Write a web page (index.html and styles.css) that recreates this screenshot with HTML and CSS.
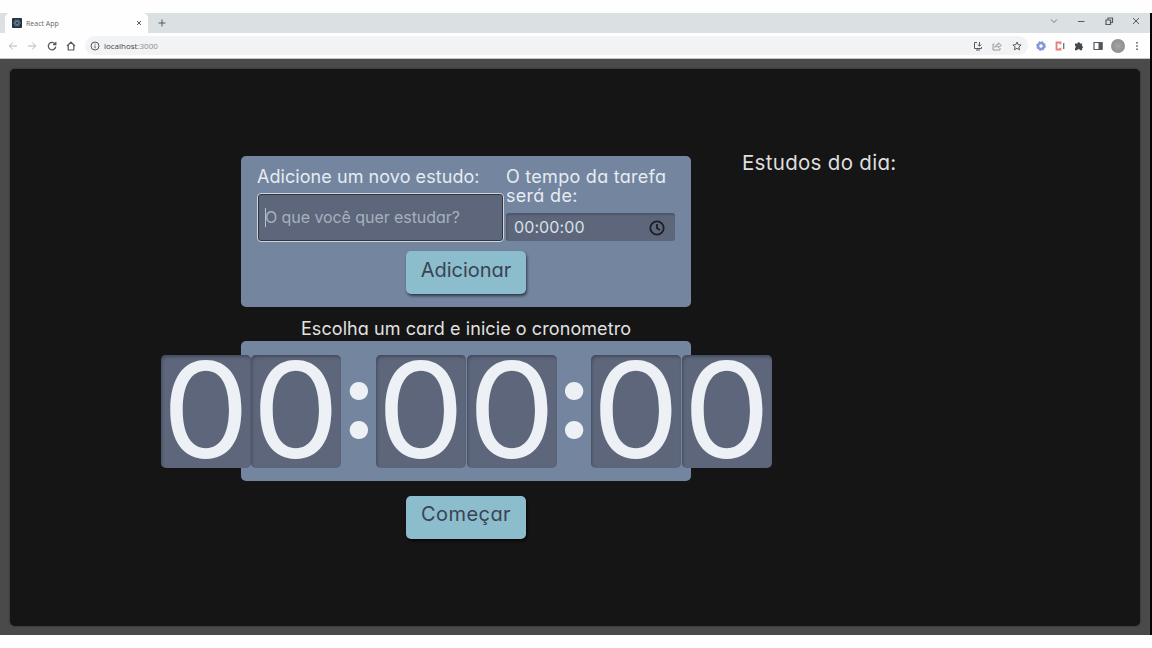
FILE: index.html
```html
<!DOCTYPE html>
<html lang="pt-BR">
<head>
<meta charset="utf-8">
<title>React App</title>
<link rel="stylesheet" href="styles.css">
</head>
<body>
<div class="browser">
  <header class="tabstrip">
    <div class="tab">
      <svg class="favicon" viewBox="0 0 10 10"><rect width="10" height="10" rx="1" fill="#26303d"/><g fill="none" stroke="#638ca3" stroke-width=".7"><ellipse cx="5" cy="5" rx="3.6" ry="1.4"/><ellipse cx="5" cy="5" rx="3.6" ry="1.4" transform="rotate(60 5 5)"/><ellipse cx="5" cy="5" rx="3.6" ry="1.4" transform="rotate(120 5 5)"/></g></svg>
      <span class="tab-title">React App</span>
      <svg class="tab-close" viewBox="0 0 6 6"><path d="M1 1l4 4M5 1L1 5"/></svg>
    </div>
    <svg class="new-tab" viewBox="0 0 8 8"><path d="M4 .5v7M.5 4h7"/></svg>
    <div class="window-controls">
      <svg class="chevron" viewBox="0 0 10 10"><path d="M2 3.500l3 3 3-3"/></svg>
      <svg viewBox="0 0 10 10"><path d="M2 5.500h6.500"/></svg>
      <svg viewBox="0 0 10 10"><path d="M2 4h4.500v4.500H2zM4 3.500V2h4.500v4.500H7" stroke-width="1.200"/></svg>
      <svg viewBox="0 0 10 10"><path d="M2 2l6 6M8 2L2 8"/></svg>
    </div>
  </header>
  <nav class="toolbar">
    <div class="nav-icons">
      <svg class="faded" viewBox="0 0 10 10"><path d="M9 5H1.500M4.800 1.500L1.300 5l3.500 3.500"/></svg>
      <svg class="faded" viewBox="0 0 10 10"><path d="M1 5h7.500M5.200 1.500L8.700 5 5.200 8.500"/></svg>
      <svg viewBox="0 0 10 10"><path d="M8.200 3.200A3.700 3.700 0 1 0 8.700 5.600M8.800 1v2.700H6" stroke-width="1.300"/></svg>
      <svg viewBox="0 0 10 10"><path d="M1 5l4-3.800L9 5M2.200 4.200V9h5.600V4.200" stroke-width="1.200"/></svg>
    </div>
    <div class="address">
      <svg viewBox="0 0 10 10"><circle cx="5" cy="5" r="4"/><path d="M5 4.500v2.800M5 2.600v1"/></svg>
      <span class="url">localhost<span class="port">:3000</span></span>
      <div class="page-actions">
        <svg viewBox="0 0 10 10"><path d="M4 1.500H1.500v6h7V6M3 9h4M6.500 1v4M4.800 3.500l1.700 1.700 1.700-1.700"/></svg>
        <svg viewBox="0 0 10 10" class="soft"><path d="M2.500 3H1v6h7V7M2.800 6.500C3 4.500 4.500 3.500 6.300 3.500V1.800L9.300 4.500 6.300 6.600V5.200C4.800 5.200 3.600 5.500 2.800 6.500z"/></svg>
        <svg viewBox="0 0 10 10"><path d="M5 1l1.200 2.700 2.900.3-2.200 1.900.7 2.900L5 7.300 2.400 8.800l.7-2.900L.9 4l2.900-.3z"/></svg>
      </div>
    </div>
    <div class="extensions">
      <svg viewBox="0 0 10 10"><circle cx="5" cy="5" r="3" stroke="#8298d8" stroke-width="2.600"/><circle cx="5" cy="5" r="4.400" stroke="#8298d8" stroke-width="1" stroke-dasharray="1.700 1.750"/></svg>
      <svg viewBox="0 0 10 10"><path d="M5.500 3.200V1.500h-4v7h4V6.800" stroke="#df8279" stroke-width="1.800"/><path d="M8.700 2v6" stroke="#66727d" stroke-width="1.300"/></svg>
      <svg viewBox="0 0 10 10"><path d="M1 2.500h2.500a1.300 1.300 0 0 1 2.600 0h2V5a1.200 1.200 0 0 1 0 2.300v1.900H5.800a1.200 1.200 0 0 0-2.400 0H1V7a1.200 1.200 0 0 0 0-2.300z" fill="#444a50" stroke="none"/></svg>
      <svg viewBox="0 0 10 10"><path d="M1 1.500h8v7H1z" stroke-width="1.200"/><path d="M6 1.500h3v7H6z" fill="#50555a"/></svg>
      <span class="avatar"></span>
      <svg viewBox="0 0 10 10"><path d="M5 1v1.600M5 4.200v1.600M5 7.400V9" stroke-width="1.600"/></svg>
    </div>
  </nav>
  <div class="viewport">
    <div class="app">
      <main class="main">
        <form class="panel form">
          <div class="fields">
            <div class="field task-field">
              <label class="label task-label">Adicione um novo estudo:</label>
              <div class="input task-input"><span class="caret"></span><span class="placeholder">O que você quer estudar?</span></div>
            </div>
            <div class="field time-field">
              <label class="label"><span class="time-label">O tempo da tarefa</span><br><span class="time-label-end">será de:</span></label>
              <div class="input time-input"><span class="time-value">00:00:00</span>
                <svg class="clock" viewBox="0 0 16 16"><circle cx="8" cy="8" r="6.700"/><path d="M8 4v4.200l3 1.800"/></svg>
              </div>
            </div>
          </div>
          <button class="button" type="button"><span class="add-text">Adicionar</span></button>
        </form>
        <p class="hint">Escolha um card e inicie o cronometro</p>
        <div class="panel clock-panel">
          <span class="digit"><span class="numeral">0</span></span><span class="digit"><span class="numeral">0</span></span>
          <span class="colon">:</span>
          <span class="digit"><span class="numeral">0</span></span><span class="digit"><span class="numeral">0</span></span>
          <span class="colon">:</span>
          <span class="digit"><span class="numeral">0</span></span><span class="digit"><span class="numeral">0</span></span>
        </div>
        <button class="button start" type="button"><span class="start-text">Começar</span></button>
      </main>
      <aside class="aside"><h2 class="aside-title">Estudos do dia:</h2></aside>
    </div>
  </div>
</div>
</body>
</html>
```
FILE: styles.css
```css
* { box-sizing: border-box; }
body {
  margin: 0;
  padding: 13px 0;
  background: #fefefe;
  overflow: hidden;
  font-family: Inter, "Open Sans", sans-serif;
  font-feature-settings: "cv11" 1;
}
svg { display: block; fill: none; stroke: #555b60; stroke-width: 1; }
.browser { height: 622px; border-right: 2px solid #050505; display: flex; flex-direction: column; background: #4a4a4a; }
.tabstrip { height: 20px; flex: none; display: flex; align-items: center; background: #dbe0e3; padding-left: 5px; }
.tab { width: 143px; height: 20px; background: #fefefe; border-radius: 5px 5px 0 0; display: flex; align-items: center; padding: 0 6px 0 7px; }
.favicon { width: 10px; height: 10px; stroke: none; }
.tab-title { flex: 1; margin-left: 4px; font: 7px "Open Sans", sans-serif; color: #666; }
.tab-close { width: 6px; height: 6px; }
.new-tab { width: 8px; height: 8px; margin-left: 10px; }
.window-controls { margin-left: auto; margin-right: 9px; display: flex; gap: 17.500px; }
.window-controls svg { width: 10px; height: 10px; margin-top: -4px; }
.window-controls .chevron { stroke: #777; }
.toolbar { height: 26px; flex: none; background: #fefefe; display: flex; align-items: center; padding: 0 8px; border-bottom: 1px solid #c6c6c6; }
.nav-icons { display: flex; gap: 9.300px; }
.nav-icons svg { width: 10px; height: 10px; }
.faded { stroke: #b5b7b9; }
.address { width: 943px; height: 19px; margin-left: 9px; border-radius: 10px; background: #f1f3f4; display: flex; align-items: center; padding: 0 6px 0 5px; }
.address svg { width: 10px; height: 10px; }
.url { margin-left: 4px; font: 8px "Open Sans", sans-serif; color: #444; }
.port { color: #8a8d90; }
.page-actions { margin-left: auto; display: flex; gap: 9.500px; }
.soft { stroke: #999; }
.extensions { display: flex; align-items: center; gap: 9.200px; margin-left: 8px; }
.extensions svg { width: 10px; height: 10px; }
.avatar { width: 14px; height: 14px; margin: 0 -2px; border-radius: 50%; background: radial-gradient(#a5a5a3, #858585); }
.viewport { flex: 1; padding: 10px 10px 9px; background: #4a4a4a; }
.app { height: 557px; border-radius: 5px; background: #151515; padding: 87px 0 0 231px; display: flex; box-shadow: 0 0 2px #222; }
.main { width: 450px; display: flex; flex-direction: column; align-items: center; }
.panel { width: 450px; flex: none; border-radius: 5px; background: #7485a0; }
.form { height: 151px; padding: 11px 16px 0; display: flex; flex-direction: column; align-items: center; }
.fields { width: 100%; display: flex; gap: 2px; }
.task-field { width: 247px; }
.time-field { width: 169px; }
.label { display: block; font-size: 18px; line-height: 19px; color: #e6ecf2; white-space: nowrap; }
.input { background: #5d667b; display: flex; align-items: center; white-space: nowrap; }
.task-label { letter-spacing: .060px; }
.task-input { margin-top: 7px; height: 49px; border: 1px solid #cbd6df; border-radius: 4px; box-shadow: inset 0 0 0 1px #30353f; padding: 0 0 1px 7px; }
.caret { width: 1px; height: 19px; background: #b7c1cb; }
.placeholder { margin-left: -1px; font-size: 16px; letter-spacing: -.070px; color: #a7b1be; }
.time-label { letter-spacing: .270px; }
.time-label-end { letter-spacing: .300px; }
.time-input { margin-top: 8px; height: 28px; border-radius: 3px; box-shadow: inset 1px 2px 2px #4d566a; padding: 0 10px 0 8px; justify-content: space-between; }
.time-value { font-size: 16px; color: #d9e0e8; padding-bottom: 1px; letter-spacing: .100px; }
.clock { width: 16px; height: 16px; margin-top: 2px; stroke: #1d1e21; stroke-width: 1.800; }
.button { width: 120px; height: 43px; flex: none; margin: 9px 0 0; padding: 0 0 6px; border: 0; border-radius: 5px; background: #8bbdcd; color: #3a4354; font: 20px Inter, sans-serif; font-feature-settings: "cv11" 1; box-shadow: 1px 2px 3px #303b4a; white-space: nowrap; }
.hint { margin: 10px 0 0; height: 24px; line-height: 24px; font-size: 18px; letter-spacing: .080px; color: #e1e1e1; white-space: nowrap; }
.clock-panel { height: 140px; display: flex; align-items: center; justify-content: center; }
.digit { width: 90px; height: 113px; margin-right: .600px; flex: none; border-radius: 5px; background: #5d667b; box-shadow: inset 1px 2px 3px #434b5d; display: flex; align-items: center; justify-content: center; color: #edf0f4; font-size: 133px; line-height: 110px; }
.digit:first-child { margin-left: 1px; }
.numeral { height: 113px; transform: scaleX(1.045); }
.colon { width: 34px; height: 113px; flex: none; text-align: center; font: 900 112px/80px Lato, sans-serif; color: #edf0f4; }
.start { margin-top: 15px; padding-bottom: 7px; box-shadow: 1px 2px 3px #080808; }
.start-text { letter-spacing: .450px; }
.aside { margin-left: 51px; }
.aside-title { margin: -5px 0 0; font-size: 20.500px; letter-spacing: .300px; line-height: 24px; font-weight: 400; color: #dedede; white-space: nowrap; }
```
